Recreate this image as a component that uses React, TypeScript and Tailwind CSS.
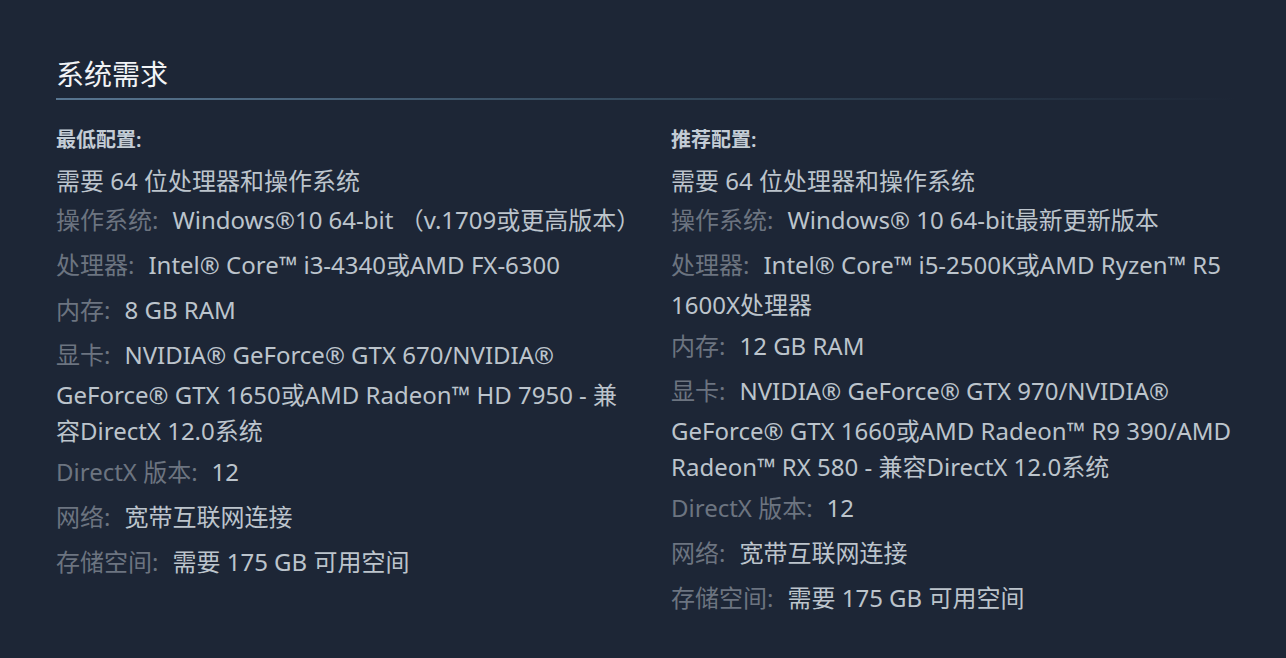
import React from "react";

type Item = { label?: string; lines: string[] };

const minItems: Item[] = [
  { lines: ["需要 64 位处理器和操作系统"] },
  { label: "操作系统:", lines: ["Windows®10 64-bit （v.1709或更高版本）"] },
  { label: "处理器:", lines: ["Intel® Core™ i3-4340或AMD FX-6300"] },
  { label: "内存:", lines: ["8 GB RAM"] },
  {
    label: "显卡:",
    lines: [
      "NVIDIA® GeForce® GTX 670/NVIDIA®",
      "GeForce® GTX 1650或AMD Radeon™ HD 7950 - 兼",
      "容DirectX 12.0系统",
    ],
  },
  { label: "DirectX 版本:", lines: ["12"] },
  { label: "网络:", lines: ["宽带互联网连接"] },
  { label: "存储空间:", lines: ["需要 175 GB 可用空间"] },
];

const recItems: Item[] = [
  { lines: ["需要 64 位处理器和操作系统"] },
  { label: "操作系统:", lines: ["Windows® 10 64-bit最新更新版本"] },
  { label: "处理器:", lines: ["Intel® Core™ i5-2500K或AMD Ryzen™ R5", "1600X处理器"] },
  { label: "内存:", lines: ["12 GB RAM"] },
  {
    label: "显卡:",
    lines: [
      "NVIDIA® GeForce® GTX 970/NVIDIA®",
      "GeForce® GTX 1660或AMD Radeon™ R9 390/AMD",
      "Radeon™ RX 580 - 兼容DirectX 12.0系统",
    ],
  },
  { label: "DirectX 版本:", lines: ["12"] },
  { label: "网络:", lines: ["宽带互联网连接"] },
  { label: "存储空间:", lines: ["需要 175 GB 可用空间"] },
];

function Column({ title, items }: { title: string; items: Item[] }) {
  return (
    <div className="w-[615px] pr-[20px]">
      <div className="text-[20px] leading-[24px] font-semibold text-[#c3ccd5] mb-[12px]">{title}</div>
      <ul>
        {items.map((it, i) => (
          <li
            key={i}
            className={`text-[24px] text-[#bcc4cc] whitespace-nowrap ${i === 0 ? "" : "mb-[1px]"}`}
          >
            {it.lines.map((l, j) => (
              <div
                key={j}
                className={i === 0 ? "leading-[34px]" : j === 0 ? "leading-[44px]" : "leading-[36px]"}
              >
                {j === 0 && it.label && <span className="text-[#6c7480] mr-[14px]">{it.label}</span>}
                {l}
              </div>
            ))}
          </li>
        ))}
      </ul>
    </div>
  );
}

export default function App() {
  return (
    <div
      className="min-h-screen bg-[#1d2636] pt-[56px] pl-[56px]"
      style={{ fontFamily: '"Noto Sans", "Noto Sans CJK SC", sans-serif' }}
    >
      <h2 className="text-[28px] leading-[36px] text-[#f2f4f6] font-normal">系统需求</h2>
      <div className="mt-[6px] h-[2px] w-[1180px] bg-gradient-to-r from-[#587590] via-[#34495c] to-transparent" />
      <div className="flex mt-[28px]">
        <Column title="最低配置:" items={minItems} />
        <Column title="推荐配置:" items={recItems} />
      </div>
    </div>
  );
}
